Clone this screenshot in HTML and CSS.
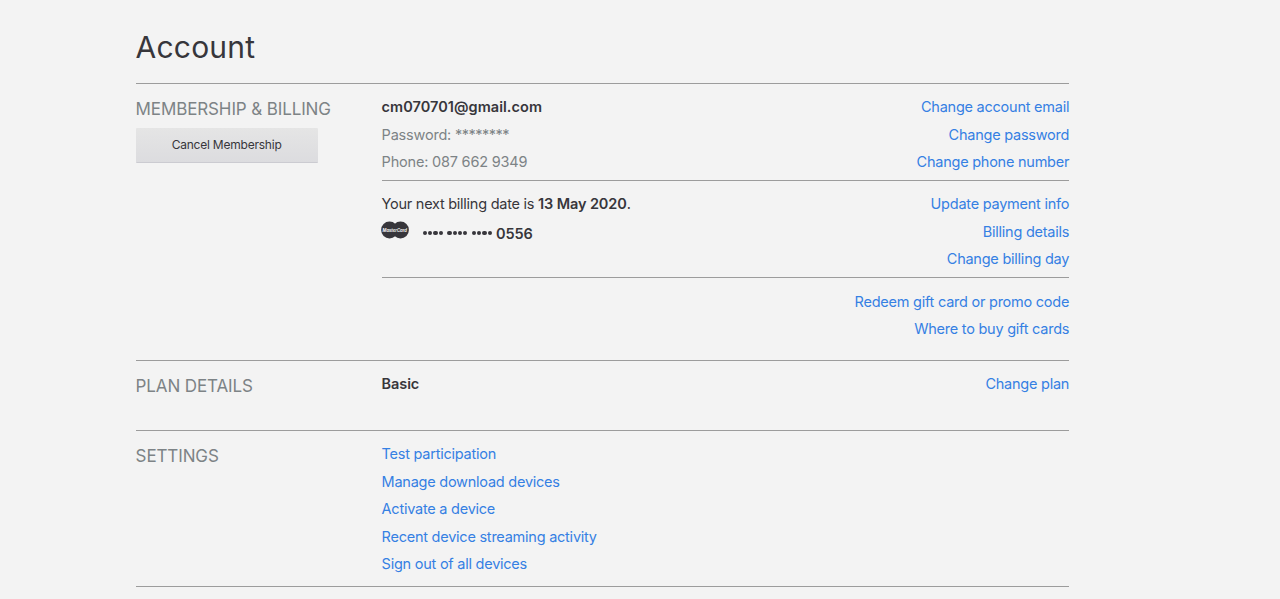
FILE: index.html
```html
<!DOCTYPE html>
<html lang="en">
<head>
    <meta charset="UTF-8">
    <meta name="viewport" content="width=device-width, initial-scale=1.0">
    <title>Account</title>
    <link rel="stylesheet" href="styles.css">
</head>
<body>
    <div class="container">
        <h1>Account</h1>

        <section class="section membership">
            <header class="section-header">
                <h2>Membership &amp; Billing</h2>
                <button class="cancel-button" type="button">Cancel Membership</button>
            </header>
            <div class="section-body">
                <div class="group">
                    <ul class="info">
                        <li><b class="email">cm070701@gmail.com</b></li>
                        <li class="muted">Password: <span class="password">********</span></li>
                        <li class="muted">Phone: 087 662 9349</li>
                    </ul>
                    <ul class="links">
                        <li><a href="#">Change account email</a></li>
                        <li><a href="#">Change password</a></li>
                        <li><a href="#">Change phone number</a></li>
                    </ul>
                </div>
                <div class="group">
                    <ul class="info">
                        <li class="billing-date">Your next billing date is <b>13 May 2020</b>.</li>
                        <li class="card">
                            <svg class="card-logo" width="28" height="18" viewBox="0 0 28 18">
                                <circle cx="8.5" cy="9" r="8.4" fill="#37363b"/>
                                <circle cx="19.5" cy="9" r="8.4" fill="#37363b"/>
                                <rect x="8.5" y="3.5" width="11" height="11" fill="#37363b"/>
                                <text x="1.5" y="10.8" textLength="24.5" lengthAdjust="spacingAndGlyphs">MasterCard</text>
                            </svg>
                            <span class="dots"><i></i><i></i><i></i><i></i></span>
                            <span class="dots"><i></i><i></i><i></i><i></i></span>
                            <span class="dots"><i></i><i></i><i></i><i></i></span>
                            <b class="card-number">0556</b>
                        </li>
                    </ul>
                    <ul class="links">
                        <li><a href="#">Update payment info</a></li>
                        <li><a href="#">Billing details</a></li>
                        <li><a href="#">Change billing day</a></li>
                    </ul>
                </div>
                <div class="group">
                    <ul class="info"></ul>
                    <ul class="links">
                        <li><a href="#">Redeem gift card or promo code</a></li>
                        <li><a href="#">Where to buy gift cards</a></li>
                    </ul>
                </div>
            </div>
        </section>

        <section class="section plan">
            <header class="section-header">
                <h2>Plan Details</h2>
            </header>
            <div class="section-body">
                <div class="group">
                    <ul class="info">
                        <li><b>Basic</b></li>
                    </ul>
                    <ul class="links">
                        <li><a href="#">Change plan</a></li>
                    </ul>
                </div>
            </div>
        </section>

        <section class="section settings">
            <header class="section-header">
                <h2>Settings</h2>
            </header>
            <div class="section-body">
                <div class="group">
                    <ul class="info">
                        <li><a href="#">Test participation</a></li>
                        <li><a href="#">Manage download devices</a></li>
                        <li><a href="#">Activate a device</a></li>
                        <li><a href="#">Recent device streaming activity</a></li>
                        <li><a href="#">Sign out of all devices</a></li>
                    </ul>
                </div>
            </div>
        </section>
    </div>
</body>
</html>
```
FILE: styles.css
```css
* {
    margin: 0;
    padding: 0;
    box-sizing: border-box;
}

body {
    font-family: Inter, 'Liberation Sans', sans-serif;
    font-size: 14.5px;
    line-height: 27.4px;
    background: #f3f3f3;
    color: #37363b;
    overflow: hidden;
}

.container {
    width: 933.6px;
    margin-left: 135.6px;
    padding-top: 26px;
    border-bottom: 1px solid #9c9c9c;
}

h1 {
    height: 57px;
    font-size: 30px;
    font-weight: 400;
    line-height: 42px;
    letter-spacing: 0.2px;
}

.section {
    display: flex;
    border-top: 1px solid #9c9c9c;
}

.section-header {
    width: 246px;
    padding-top: 13px;
}

h2 {
    font-size: 17px;
    font-weight: 400;
    line-height: 24px;
    letter-spacing: -0.12px;
    text-transform: uppercase;
    white-space: nowrap;
    color: #7d8386;
}

.section-body {
    flex: 1;
}

.group {
    display: flex;
    justify-content: space-between;
    padding: 9.3px 0 4.7px;
}

.group + .group {
    border-top: 1px solid #9c9c9c;
}

.membership .group:last-child {
    padding-bottom: 17.5px;
}

.plan .group {
    padding-bottom: 32.5px;
}

.settings .group {
    padding-bottom: 8.6px;
}

ul {
    list-style: none;
}

li {
    height: 27.4px;
    white-space: nowrap;
}

b {
    font-weight: 600;
    letter-spacing: -0.1px;
}

a {
    font-weight: 400;
    letter-spacing: -0.24px;
    color: #3580e3;
    text-decoration: none;
}

.links {
    text-align: right;
}

.email {
    letter-spacing: 0.05px;
}

.muted {
    letter-spacing: -0.2px;
    color: #7d8386;
}

.password {
    letter-spacing: -0.5px;
}

.billing-date {
    letter-spacing: -0.26px;
}

.cancel-button {
    display: block;
    width: 182px;
    height: 35px;
    margin-top: 7px;
    padding-bottom: 2px;
    border: none;
    border-bottom: 1px solid #cbcbd1;
    border-radius: 1px;
    background: linear-gradient(#e5e5e5, #dcdcdf);
    font-family: inherit;
    font-size: 12px;
    letter-spacing: -0.22px;
    color: #37363b;
    cursor: pointer;
}

.card {
    display: flex;
    align-items: center;
}

.card-logo {
    margin: -3px 13.6px 0 -0.3px;
}

.card-logo text {
    font-size: 4.6px;
    font-style: italic;
    font-weight: 700;
    fill: #f3f3f3;
}

.dots {
    display: flex;
    gap: 1px;
    margin: 3px 4.2px 0 0;
}

.dots i {
    width: 4.3px;
    height: 4.3px;
    border-radius: 50%;
    background: #37363b;
}

.card-number {
    margin-top: 4px;
    letter-spacing: -0.1px;
}
```
